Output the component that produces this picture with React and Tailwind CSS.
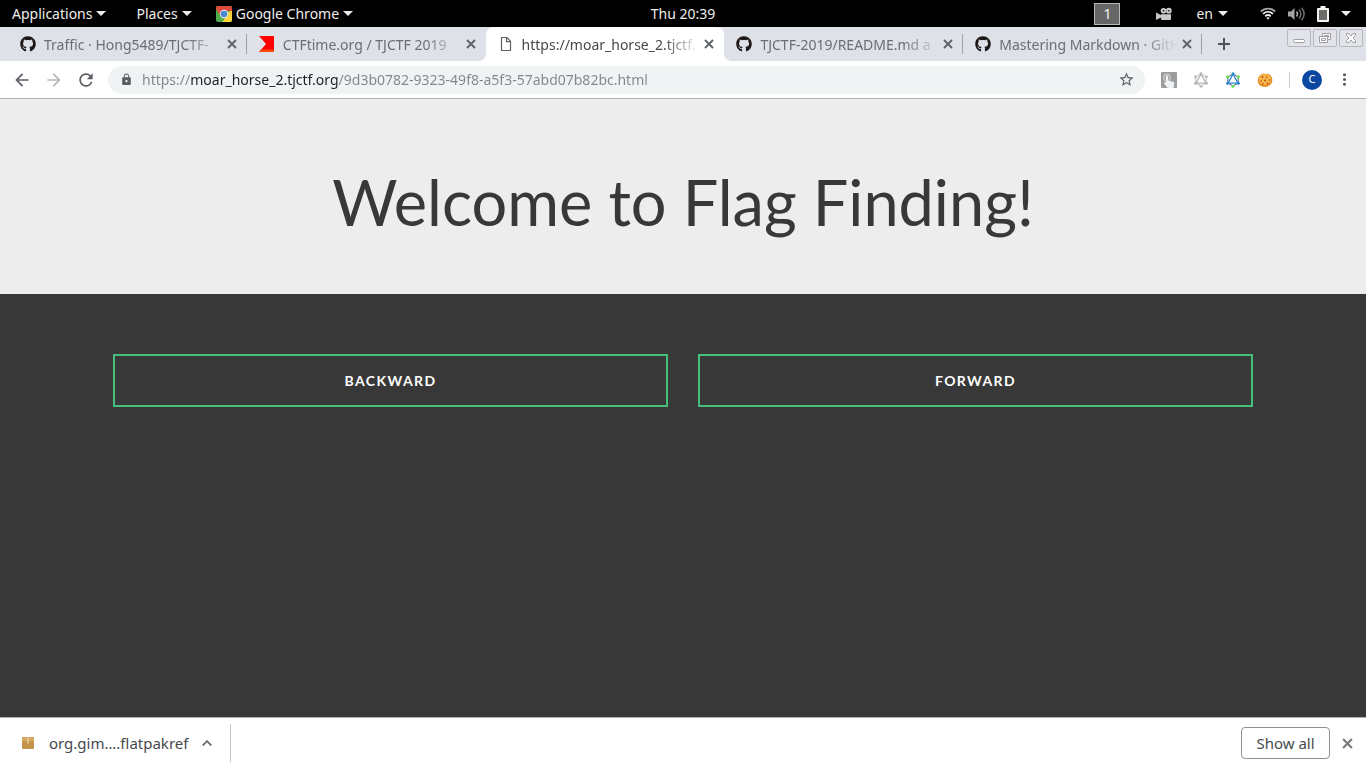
import React from "react";
import { FaGithub } from "react-icons/fa";
import { MdArrowBack, MdArrowForward, MdRefresh, MdLock, MdStarBorder, MdMoreVert } from "react-icons/md";

const uiFont = "font-['Noto_Sans','Open_Sans',sans-serif]";

function Caret() {
  return (
    <svg viewBox="0 0 10 5" className="h-[5px] w-[10px] shrink-0 fill-[#eeeeec]" aria-hidden="true">
      <path d="M0 0h10L5 5z" />
    </svg>
  );
}

function Cross({ className }) {
  return (
    <svg viewBox="0 0 10 10" className={className} fill="none" stroke="currentColor" strokeWidth="1.9" aria-hidden="true">
      <path d="M1 1l8 8M9 1 1 9" />
    </svg>
  );
}

function ChromeLogo() {
  return (
    <svg viewBox="0 0 16 16" className="size-4 shrink-0" aria-hidden="true">
      <defs>
        <clipPath id="chromeClip"><rect width="16" height="16" rx="2" /></clipPath>
      </defs>
      <g clipPath="url(#chromeClip)">
        <rect width="16" height="16" fill="#4fae4b" />
        <path d="M8 8 16 4.5V16H6.5L11 9z" fill="#fcd23c" />
        <path d="M0 0h16v5H8L4.500 9.500 0 3z" fill="#dd4b3e" />
      </g>
      <circle cx="8" cy="8" r="4.200" fill="#f3f3f3" />
      <circle cx="8" cy="8" r="3.300" fill="#4a87cf" />
    </svg>
  );
}

function CtfTimeLogo() {
  return (
    <svg viewBox="0 0 16 16" className="size-4 shrink-0" aria-hidden="true">
      <path d="M0 0h15v16H0l7-8z" fill="#f00" />
      <path d="M2 13.500h13V16H0z" fill="#f9480a" />
    </svg>
  );
}

function PageIcon() {
  return (
    <svg viewBox="0 0 16 16" className="size-4 shrink-0" fill="none" stroke="#5f6368" strokeWidth="1.200" aria-hidden="true">
      <path d="M3.500 1.500h5.500l3.500 3.700v9.300h-9z" />
      <path d="M8.500 1.500v4.200h4" />
    </svg>
  );
}

function GraphIcon({ line, green, blue }) {
  return (
    <svg viewBox="0 0 16 16" className="size-4" aria-hidden="true">
      <path d="M8 2 13.200 5v6L8 14 2.800 11V5z" fill="none" stroke={line} strokeWidth="1" />
      <path d="M8 2 13 11.200H3z" fill="none" stroke={blue} strokeWidth="1.300" />
      <circle cx="8" cy="1.800" r="1.500" fill={blue} />
      <circle cx="2.600" cy="4.800" r="1.500" fill={green} />
      <circle cx="13.400" cy="4.800" r="1.500" fill={green} />
      <circle cx="2.600" cy="11.200" r="1.500" fill={blue} />
      <circle cx="13.400" cy="11.200" r="1.500" fill={blue} />
      <circle cx="8" cy="14.200" r="1.500" fill={green} />
    </svg>
  );
}

function TouchIcon() {
  return (
    <svg viewBox="0 0 16 16" className="size-4" aria-hidden="true">
      <rect width="16" height="16" rx="1" fill="#9c9c9c" />
      <circle cx="6" cy="5.500" r="4" fill="#c6c6c6" />
      <circle cx="6" cy="5.500" r="2.600" fill="#adadad" />
      <path d="M5 4.500c0-1.300 2-1.300 2 0v4l5.200 1.200c1 .3 1.300 1 1.100 2L12.500 16H6.800L3 11.500c-.4-1 .8-1.600 1.500-1L5 11z" fill="#eef1f6" />
    </svg>
  );
}

function CookieIcon() {
  return (
    <svg viewBox="0 0 16 16" className="size-4" aria-hidden="true">
      <path d="M1 6C2 3.500 4 2 7 1.500l2 .5 2-.3c2.500 1 4.300 3.500 4.300 6.300 0 4-3 7-7.300 7-4 0-7.300-2.800-7.300-6.500z" fill="#e08a20" />
      <path d="M1.800 6c1-2.500 2.500-3.700 5.200-4l2 .6 1.600-.4c2 1 3.600 2.800 3.600 5.300 0 3.200-2.700 5.700-6.200 5.700S1.300 10.500 1.800 6z" fill="#fbb44a" />
      <g fill="#9a4f18">
        <circle cx="5.500" cy="5" r=".9" /><circle cx="9.800" cy="5.300" r=".8" /><circle cx="12.500" cy="8" r=".8" />
        <circle cx="8" cy="8.500" r=".9" /><circle cx="4" cy="9" r=".8" /><circle cx="10.500" cy="11.500" r=".9" /><circle cx="6" cy="12" r=".8" />
      </g>
    </svg>
  );
}

function CameraIcon() {
  return (
    <svg viewBox="0 0 16 14" className="h-[14px] w-4 fill-[#c9c9c7]" aria-hidden="true">
      <path fillRule="evenodd" d="M7.500 1a2.800 2.800 0 1 1 0 5.600 2.800 2.800 0 0 1 0-5.600zm0 2a.8.8 0 1 0 0 1.600.8.8 0 0 0 0-1.600zM12.800.8a2.900 2.900 0 1 1 0 5.800 2.900 2.900 0 0 1 0-5.800zm0 2.100a.8.8 0 1 0 0 1.600.8.8 0 0 0 0-1.600z" />
      <path d="M5 7.200h10V12a1 1 0 0 1-1 1H6a1 1 0 0 1-1-1v-1.500L0 13V5.500l5 2.500z" />
    </svg>
  );
}

function WifiIcon() {
  return (
    <svg viewBox="0 0 16 13" className="h-[13px] w-4" fill="none" stroke="#eeeeec" strokeWidth="1.800" aria-hidden="true">
      <path d="M.8 4.600c4-4 10.400-4 14.400 0" stroke="#a5a5a3" />
      <path d="M3 6.900c3-2.700 7-2.700 10 0M5.200 9.200c1.700-1.400 3.900-1.400 5.600 0" />
      <path d="m6.300 10.700 1.700 2 1.700-2c-1-.7-2.400-.7-3.400 0z" fill="#eeeeec" stroke="none" />
    </svg>
  );
}

function VolumeIcon() {
  return (
    <svg viewBox="0 0 17 14" className="h-[14px] w-[17px]" fill="none" stroke="#6e6e6c" strokeWidth="1.500" aria-hidden="true">
      <path d="M0 4.500h3L6.500 1v12L3 9.500H0z" fill="#a5a5a3" stroke="none" />
      <path d="M8.500 4.500c1.200 1.500 1.200 3.500 0 5" stroke="#a5a5a3" />
      <path d="M11 2.500c2.300 2.700 2.300 6.300 0 9M13.500.8c3.300 3.900 3.300 8.500 0 12.400" />
    </svg>
  );
}

function BatteryIcon() {
  return (
    <svg viewBox="0 0 12 16" className="h-4 w-3" aria-hidden="true">
      <path d="M3.500 0h5v2H11a1 1 0 0 1 1 1v12a1 1 0 0 1-1 1H1a1 1 0 0 1-1-1V3a1 1 0 0 1 1-1h2.500z" fill="#f4f4f2" />
      <rect x="2" y="4" width="8" height="10" fill="#6c6c6a" />
    </svg>
  );
}

function PackageIcon() {
  return (
    <svg viewBox="0 0 12 12" className="size-3" aria-hidden="true">
      <rect width="12" height="12" rx=".8" fill="#c3944a" />
      <path d="M0 .8Q0 0 .8 0h10.400q.8 0 .8.800V4H0z" fill="#d3a763" />
      <path d="M5.300 1h1.500v5.500H5.300z" fill="#ead4a8" />
    </svg>
  );
}

function SystemBar() {
  return (
    <header className="grid h-[27px] shrink-0 grid-cols-[1fr_auto_1fr] items-center bg-black text-[14px] text-[#eeeeec]">
      <nav className="flex items-center gap-[30px] pl-3">
        <button className="flex items-center gap-1">Applications <Caret /></button>
        <div className="flex items-center gap-6">
          <button className="flex items-center gap-1">Places <Caret /></button>
          <button className="flex items-center gap-1"><ChromeLogo />Google Chrome <Caret /></button>
        </div>
      </nav>
      <time>Thu 20:39</time>
      <div className="flex items-center justify-end pr-[15px]">
        <span className="mr-9 flex h-[22px] w-[26px] items-center justify-center border border-[#b8b8b8] bg-[#666] text-[15px]">1</span>
        <span className="mr-6"><CameraIcon /></span>
        <button className="mr-8 flex items-center gap-[5px]">en <Caret /></button>
        <button className="flex items-center gap-3" aria-label="System menu"><WifiIcon /><VolumeIcon /><BatteryIcon /><Caret /></button>
      </div>
    </header>
  );
}

const githubMark = <FaGithub className="size-4 shrink-0 text-[#1b1817]" />;

const tabs = [
  { title: "Traffic · Hong5489/TJCTF-", icon: githubMark, divider: true },
  { title: "CTFtime.org / TJCTF 2019", icon: <CtfTimeLogo /> },
  { title: "https://moar_horse_2.tjctf.", icon: <PageIcon />, active: true },
  { title: "TJCTF-2019/README.md a", icon: githubMark, divider: true },
  { title: "Mastering Markdown · GitH", icon: githubMark, divider: true },
];

function Tab({ title, icon, active, divider }) {
  return (
    <div className={`relative flex min-w-0 flex-1 items-center pl-3 pr-[10px] ${active ? "rounded-t-lg bg-white text-[#45494d]" : "text-[#6b6e73]"}`}>
      {active && <span className="absolute bottom-0 right-full size-2 bg-[radial-gradient(circle_at_0_0,transparent_8px,white_8px)]" />}
      {active && <span className="absolute bottom-0 left-full size-2 bg-[radial-gradient(circle_at_100%_0,transparent_8px,white_8px)]" />}
      {icon}
      <a href="#page" className="ml-2 min-w-0 flex-1 whitespace-nowrap [mask-image:linear-gradient(to_right,black_calc(100%-36px),transparent)]">{title}</a>
      <button aria-label={`Close ${title}`} className="ml-1 flex size-[10px] shrink-0 items-center justify-center text-[#5f6368]"><Cross className="size-[10px]" /></button>
      {divider && <span className="absolute right-0 top-[7px] h-5 w-px bg-[#9da1a8]" />}
    </div>
  );
}

function WindowButton({ label, children }) {
  return (
    <button aria-label={label} className="h-[18px] w-6 rounded-[2px] border border-[#b6b8bd] bg-[#e2e4e9]">
      <svg viewBox="0 0 22 16" className="h-4 w-[22px]" fill="#fff" stroke="#9b9da2" strokeWidth="1" aria-hidden="true">{children}</svg>
    </button>
  );
}

function TabStrip() {
  return (
    <div className="flex h-[34px] shrink-0 justify-between bg-[#dee1e8] pl-2 text-[14px]">
      <div className="flex max-w-[1194px] flex-1">
        {tabs.map((t) => <Tab key={t.title} {...t} />)}
      </div>
      <button aria-label="New tab" className="flex w-11 items-center justify-center text-[#505458]">
        <svg viewBox="0 0 12 12" className="size-3" fill="none" stroke="currentColor" strokeWidth="2" aria-hidden="true"><path d="M6 0v12M0 6h12" /></svg>
      </button>
      <div className="ml-auto flex gap-[2px] pr-[3px] pt-[2px]">
        <WindowButton label="Minimize"><rect x="5.500" y="9.500" width="11" height="3" rx="1" /></WindowButton>
        <WindowButton label="Restore">
          <path d="M8.500 3.500h8v6h-8z" /><path d="M10.500 5.500h4v2h-4z" />
          <path d="M5.500 6.500h8v6h-8z" /><path d="M7.500 8.500h4v2h-4z" />
        </WindowButton>
        <WindowButton label="Close"><path d="M6.500 3.500h2.500l2 2.500 2-2.500h2.500v2L13 8l2.500 2.500v2H13l-2-2.500-2 2.500H6.500v-2L9 8 6.500 5.500z" /></WindowButton>
      </div>
    </div>
  );
}

function Toolbar() {
  return (
    <div className="flex h-[38px] shrink-0 items-center border-b border-[#b1b1b1] bg-white px-3 text-[#5a5e63]">
      <div className="flex items-center gap-3">
        <button aria-label="Back"><MdArrowBack size={20} /></button>
        <button aria-label="Forward" className="text-[#b4b6b8]"><MdArrowForward size={20} /></button>
        <button aria-label="Reload"><MdRefresh size={20} /></button>
      </div>
      <form className="ml-3 flex h-7 flex-1 items-center rounded-full bg-[#eff3f4] pl-3 pr-[10px]" onSubmit={(e) => e.preventDefault()}>
        <MdLock size={13} className="shrink-0" />
        <input
          aria-label="Address"
          defaultValue="https://moar_horse_2.tjctf.org/9d3b0782-9323-49f8-a5f3-57abd07b82bc.html"
          className="ml-[9px] min-w-0 flex-1 bg-[linear-gradient(to_right,#80868b_48px,#202124_48px,#202124_196px,#80868b_196px)] bg-clip-text text-[14px] text-transparent caret-black outline-none"
        />
        <button type="button" aria-label="Bookmark"><MdStarBorder size={17} /></button>
      </form>
      <div className="ml-4 flex items-center gap-4">
        <button aria-label="Touch extension"><TouchIcon /></button>
        <button aria-label="GraphQL network"><GraphIcon line="#bcbcbc" green="#bcbcbc" blue="#b4b4b4" /></button>
        <button aria-label="GraphQL client"><GraphIcon line="#555f69" green="#62dd4b" blue="#2585cf" /></button>
        <button aria-label="Cookies"><CookieIcon /></button>
      </div>
      <span className="ml-4 h-4 w-px bg-[#c9cbce]" />
      <button aria-label="Profile" className="ml-3 flex size-5 items-center justify-center rounded-full bg-[#0d47a1] text-[11px] text-white">C</button>
      <button aria-label="Menu" className="ml-[13px]"><MdMoreVert size={19} /></button>
    </div>
  );
}

function Page() {
  return (
    <main id="page" className="flex flex-1 flex-col bg-[#383838] font-[Lato,sans-serif]">
      <div className="bg-[#ededed] px-8 pb-[53px] pt-[63px] text-center">
        <h1 className="text-[63px] leading-[79px] text-[#383838]">Welcome to Flag Finding!</h1>
      </div>
      <div className="mx-auto grid w-full max-w-[1140px] grid-cols-2 gap-[30px] pt-[60px]">
        {["Backward", "Forward"].map((label) => (
          <a key={label} href="#page" className="flex h-[53px] items-center justify-center border-2 border-[#45be7b] text-[14px] font-bold uppercase tracking-widest text-white">{label}</a>
        ))}
      </div>
    </main>
  );
}

function DownloadBar() {
  return (
    <footer className="flex h-[51px] shrink-0 items-center border-t border-[#b1b1b1] bg-white pr-[13px] text-[15px] text-[#45494d]">
      <div className="flex h-[38px] w-[231px] items-center border-r border-[#c6c8ca] pl-[22px]">
        <PackageIcon />
        <a href="#download" className="ml-[15px]">org.gim….flatpakref</a>
        <button aria-label="Download options" className="ml-[14px] text-[#6b6e73]">
          <svg viewBox="0 0 10 6" className="h-[6px] w-[10px]" fill="none" stroke="currentColor" strokeWidth="1.800" aria-hidden="true"><path d="m.7 5.500 4.300-4.300 4.300 4.300" /></svg>
        </button>
      </div>
      <button className="ml-auto h-8 w-[89px] rounded-[4px] border border-[#8e9093]">Show all</button>
      <button aria-label="Close downloads bar" className="ml-3 text-[#75787c]"><Cross className="size-[11px]" /></button>
    </footer>
  );
}

export default function App() {
  return (
    <div className={`flex min-h-screen flex-col ${uiFont}`}>
      <SystemBar />
      <TabStrip />
      <Toolbar />
      <Page />
      <DownloadBar />
    </div>
  );
}
